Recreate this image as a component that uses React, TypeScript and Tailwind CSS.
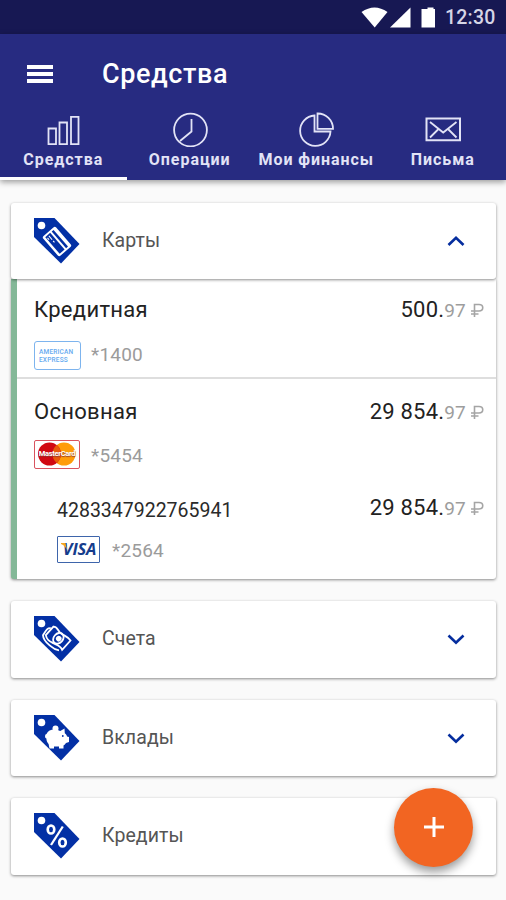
import type { ReactNode } from 'react';

function StatusBar() {
  return (
    <div className="flex h-[34px] items-center justify-end bg-[#171853] pr-[11px]">
      <svg width="75" height="34" viewBox="0 0 75 34" fill="#fff">
        <path d="M1.500 12Q14.500 3 27.500 12L14.700 27.500Z" />
        <path d="M50.500 7.500v20H30z" />
        <path d="M66 9h3V7.500h6V9h2v18.500H63V9z" transform="translate(-1.500 0)" />
      </svg>
      <span className="ml-[10px] w-[50px] pt-0.5 text-[19.500px] leading-[32px] font-medium tracking-[0.200px] whitespace-nowrap text-[#d5d5e6]">12:30</span>
    </div>
  );
}

function BarsIcon() {
  return (
    <svg width="36" height="36" viewBox="0 0 36 36" fill="none" stroke="#e2e3f6" strokeWidth="1.8">
      <path d="M3.500 17.500H11v15.700H3.500zM14.500 11.500H22v21.700h-7.500zM26 5.800h7.500v27.400H26z" />
    </svg>
  );
}

function ClockIcon() {
  return (
    <svg width="36" height="36" viewBox="0 0 36 36" fill="none" stroke="#e2e3f6" strokeWidth="1.8">
      <circle cx="18.500" cy="19" r="16.400" />
      <path d="M19.500 8v12.500L8 30" />
    </svg>
  );
}

function PieIcon() {
  return (
    <svg width="36" height="36" viewBox="0 0 36 36" fill="none" stroke="#e2e3f6" strokeWidth="1.8">
      <path d="M16.500 4.500A15.200 15.200 0 1 0 32.500 20.500H16.500z" />
      <path d="M19.500 2.500A15.300 15.300 0 0 1 35 17.800H19.500z" />
    </svg>
  );
}

function MailIcon() {
  return (
    <svg width="36" height="36" viewBox="0 0 36 36" fill="none" stroke="#e2e3f6" strokeWidth="1.8">
      <path d="M1.500 7.500h33.500v21.800H1.500z" strokeWidth="2" />
      <path d="M5 11l13.200 10.500L31.500 11M5 26.500l8-8M31.500 26.500l-8-8" />
    </svg>
  );
}

const tabs = [
  { label: 'Средства', icon: <BarsIcon />, active: true },
  { label: 'Операции', icon: <ClockIcon /> },
  { label: 'Мои финансы', icon: <PieIcon /> },
  { label: 'Письма', icon: <MailIcon /> },
];

function Header() {
  return (
    <header className="relative h-[146px] bg-[#272b81] shadow-[0_2px_6px_rgba(0,0,0,0.4)]">
      <div className="flex h-[77px] items-center pt-0.5 pl-[27px]">
        <div className="flex w-[26px] flex-col gap-[3px]">
          <span className="h-1 bg-white" />
          <span className="h-1 bg-white" />
          <span className="h-1 bg-white" />
        </div>
        <h1 className="ml-[49px] pt-0.5 text-[27px] leading-none font-medium tracking-[0.600px] text-white">Средства</h1>
      </div>
      <nav className="grid h-[69px] grid-cols-4">
        {tabs.map((tab) => (
          <div key={tab.label} className="relative flex flex-col items-center text-[#e2e3f6]">
            <div className="[&>svg]:block">{tab.icon}</div>
            <span className="pt-px text-[16px] leading-[24px] font-bold tracking-[0.950px] whitespace-nowrap">{tab.label}</span>
            {tab.active && <span className="absolute bottom-0 left-0 h-[3px] w-full bg-white" />}
          </div>
        ))}
      </nav>
    </header>
  );
}

function Tag({ children }: { children: ReactNode }) {
  return (
    <svg width="46" height="46" viewBox="0 0 46 46" className="shrink-0">
      <path d="M0 0h20.500L45.500 26 27 45.500 0 19z" fill="#0330a5" />
      <circle cx="7.500" cy="7.500" r="3.800" fill="#fff" />
      {children}
    </svg>
  );
}

function CardGlyph() {
  return (
    <g transform="translate(23 23.500) rotate(49)">
      <rect x="-13" y="-8.500" width="26" height="17" rx="2" fill="#fff" />
      <rect x="-11" y="-5" width="22" height="2.500" fill="#0330a5" />
      <rect x="-11" y="-0.500" width="22" height="6.500" fill="#0330a5" />
      <path d="M-9.500 2.500h5M-9 4.800h2.500M-3 2.500h2" stroke="#fff" strokeWidth="1.100" />
    </g>
  );
}

function MoneyGlyph() {
  return (
    <g transform="translate(24 22) rotate(42)" fill="none" stroke="#fff" strokeWidth="1.800">
      <path d="M-11-5.500c4-3 6 1 11 0s7-2 11-1V6c-4-2-7 0-11 1s-7 2-11-1z" />
      <ellipse cx="0.500" cy="0" rx="4.600" ry="6" />
      <path d="M-12-2.500c-3 2-2 5-1 10.500 4 4 9 3 13 3s7-1 9-2.500" />
      <circle cx="1" cy="0" r="2.800" fill="#fff" stroke="none" />
    </g>
  );
}

function PiggyGlyph() {
  return (
    <g fill="#fff">
      <circle cx="21.500" cy="13.500" r="3" />
      <path d="M12.500 20.500C14 17 18 15.600 22 16.200c2 .3 3.200.7 4.300 1.400L30.500 15l.3 4.700c1.300.9 1.900 2 2.200 3.200l2 .7v5l-3 .9c-.7 1.100-1.500 1.900-2.500 2.500V35h-4.500v-2h-5v2h-4.500l-.9-4.500c-1.400-1.500-2.200-3.300-2.200-5.500-1.500-.5-1.700-2.500-.9-4z" transform="translate(0 -1.500)" />
      <circle cx="28.800" cy="21" r=".9" fill="#0330a5" />
    </g>
  );
}

function PercentGlyph() {
  return (
    <g fill="none" stroke="#fff" strokeWidth="2.600">
      <ellipse cx="17" cy="16.500" rx="3.300" ry="4" />
      <ellipse cx="28.500" cy="29.500" rx="3.300" ry="4" />
      <path d="M28.800 13.500L17 32" strokeWidth="2.300" />
    </g>
  );
}

function Chevron({ up }: { up?: boolean }) {
  return (
    <svg width="18" height="12" viewBox="0 0 18 12" fill="none" stroke="#052d9e" strokeWidth="2.600" className="mr-[31px] ml-auto">
      <path d={up ? 'M1.500 10L9 2.700l7.500 7.300' : 'M1.500 2.500L9 9.800l7.500-7.300'} />
    </svg>
  );
}

const cardShadow = 'shadow-[0_1px_3px_rgba(0,0,0,0.45)]';

function Section({ title, glyph, open, chevron = true }: { title: string; glyph: ReactNode; open?: boolean; chevron?: boolean }) {
  return (
    <div className={`relative flex h-[76.500px] items-center rounded-[3px] bg-white pl-[23px] ${cardShadow}`}>
      <Tag>{glyph}</Tag>
      <span className="ml-[22px] text-[19.500px] leading-6 tracking-[0.080px] text-[#555]">{title}</span>
      {chevron && <Chevron up={open} />}
    </div>
  );
}

function Amount({ value }: { value: string }) {
  return (
    <div className="flex items-baseline whitespace-nowrap text-[#9d9d9d]">
      <span className="text-[22px] leading-7 tracking-[0.200px] text-[#222]">{value}.</span>
      <span className="text-[19px] tracking-[0.200px]">97</span>
      <svg width="14" height="14" viewBox="0 0 14 14" fill="none" stroke="#a5a5a5" strokeWidth="1.600" className="ml-[5px]">
        <path d="M3.500 14V1.500h4.500c5 0 5 6.500 0 6.500H0M0 11h7.500" />
      </svg>
    </div>
  );
}

function Amex() {
  return (
    <div className="flex h-[29px] w-[47px] flex-col justify-center rounded-[3px] border border-[#7db4ee] pl-1 text-[6.500px] leading-[8px] font-medium tracking-[0.200px] text-[#65aaf0]">
      <span>AMERICAN</span>
      <span>EXPRESS</span>
    </div>
  );
}

function MasterCard() {
  return (
    <div className="relative h-[29px] w-[46px] rounded-[2px] border border-[#d9535f]">
      <svg width="44" height="27" viewBox="0 0 44 27" className="block">
        <circle cx="29" cy="13" r="11.500" fill="#ff9c0a" />
        <circle cx="14.500" cy="13" r="11.500" fill="#d10811" />
        <path d="M21.700 4.100a11.500 11.500 0 0 1 0 17.800 11.500 11.500 0 0 1 0-17.800" fill="#e9590b" />
      </svg>
      <span className="absolute inset-x-0 top-[8px] text-center text-[7.500px] leading-[10px] font-bold tracking-[-0.300px] text-white [text-shadow:0_1px_1px_#8d3932]">MasterCard</span>
    </div>
  );
}

function Visa() {
  return (
    <div className="relative flex h-[27px] w-[43px] items-center justify-center rounded-[1px] border-[1.500px] border-[#3e65ab] pl-0.5">
      <span className="font-['Open_Sans'] text-[16.500px] leading-none font-bold tracking-[-0.200px] text-[#153d8c] italic">VISA</span>
      <svg width="7" height="8" viewBox="0 0 7 8" className="absolute top-[6px] left-[3px]">
        <path d="M0 0h4.500L6 7C5 4.500 3 2 0 1z" fill="#f5a623" />
      </svg>
    </div>
  );
}

function CardsBody() {
  return (
    <div className={`h-[300px] rounded-b-[3px] border-l-[6px] border-[#84b898] bg-white pr-[11px] pl-[17px] ${cardShadow}`}>
      <div className="-mr-[11px] -ml-[17px] h-[100px] border-b-2 border-[#dedede] pt-[17px] pr-[11px] pl-[17px]">
        <div className="flex justify-between">
          <span className="text-[22px] leading-7 tracking-[0.300px] text-[#222]">Кредитная</span>
          <Amount value="500" />
        </div>
        <div className="mt-[15px] flex h-[30px] items-center">
          <Amex />
          <span className="ml-[10px] text-[19px] tracking-[0.200px] text-[#9b9b9b]">*1400</span>
        </div>
      </div>
      <div className="flex justify-between pt-[19px]">
        <span className="text-[22px] leading-7 tracking-[0.300px] text-[#222]">Основная</span>
        <Amount value="29 854" />
      </div>
      <div className="mt-[12px] flex h-[30px] items-center">
        <MasterCard />
        <span className="ml-[11px] pt-1 text-[19px] tracking-[0.200px] text-[#9b9b9b]">*5454</span>
      </div>
      <div className="mt-[24px] flex justify-between pl-[23px]">
        <span className="pt-[3px] text-[19.500px] leading-7 text-[#2a2a2a]">4283347922765941</span>
        <Amount value="29 854" />
      </div>
      <div className="mt-[10px] flex h-[30px] items-center pl-[23px]">
        <Visa />
        <span className="ml-[12px] pt-1 text-[19px] tracking-[0.200px] text-[#9b9b9b]">*2564</span>
      </div>
    </div>
  );
}

export default function App() {
  return (
    <div className="relative h-[900px] w-[506px] overflow-hidden bg-[#fafafa] font-[Roboto,sans-serif]">
      <StatusBar />
      <Header />
      <main className="flex flex-col gap-[22px] pt-[22.500px] pr-[10px] pl-[11px]">
        <div>
          <Section title="Карты" glyph={<CardGlyph />} open />
          <CardsBody />
        </div>
        <Section title="Счета" glyph={<MoneyGlyph />} />
        <Section title="Вклады" glyph={<PiggyGlyph />} />
        <Section title="Кредиты" glyph={<PercentGlyph />} chevron={false} />
      </main>
      <button className="absolute top-[788px] left-[394px] flex size-[79px] items-center justify-center rounded-full bg-[#f26522] shadow-[0_5px_10px_rgba(0,0,0,0.4)]">
        <svg width="22" height="22" viewBox="0 0 22 22" stroke="#fff" strokeWidth="3" className="-mt-px">
          <path d="M11 1v20M1 11h20" />
        </svg>
      </button>
    </div>
  );
}
